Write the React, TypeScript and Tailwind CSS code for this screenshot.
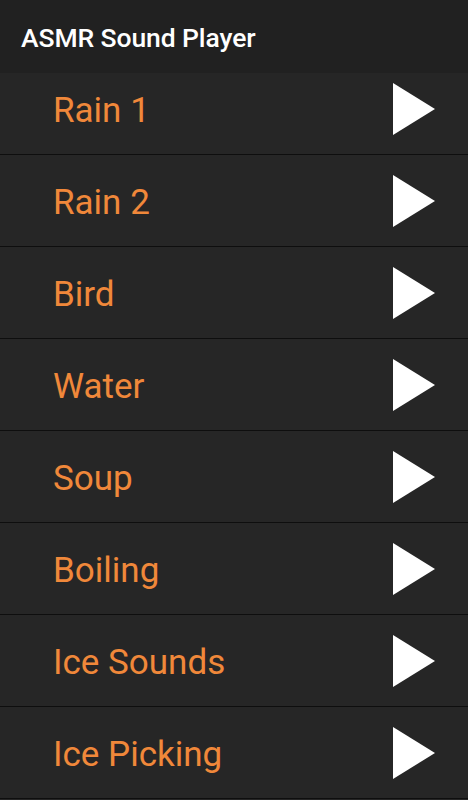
import React from "react";

const items = ["Rain 1", "Rain 2", "Bird", "Water", "Soup", "Boiling", "Ice Sounds", "Ice Picking"];

function Play() {
  return (
    <svg width="42" height="52" viewBox="0 0 42 52">
      <polygon points="0,0 42,26 0,52" fill="#ffffff" />
    </svg>
  );
}

export default function App() {
  return (
    <div className="w-[468px] h-[800px] overflow-hidden bg-[#262626]" style={{ fontFamily: "Roboto, 'Liberation Sans', sans-serif" }}>
      <div className="h-[73px] bg-[#212121] flex items-center pl-[21px] pt-[2px]">
        <span className="text-white text-[26.5px] font-medium tracking-[-0.1px]">ASMR Sound Player</span>
      </div>
      <div className="flex flex-col">
        {items.map((t, i) => (
          <div
            key={t}
            className={
              i === 0
                ? "h-[82px] flex items-center justify-between pl-[53px] pr-[33px] pb-[10px] border-b-[1px] border-[#0e0e0e]"
                : "h-[92px] flex items-center justify-between pl-[53px] pr-[33px] border-b-[1px] border-[#0e0e0e]"
            }
          >
            <span className="text-[#f0883a] text-[35px] leading-none pt-[3px]">{t}</span>
            <Play />
          </div>
        ))}
      </div>
    </div>
  );
}
